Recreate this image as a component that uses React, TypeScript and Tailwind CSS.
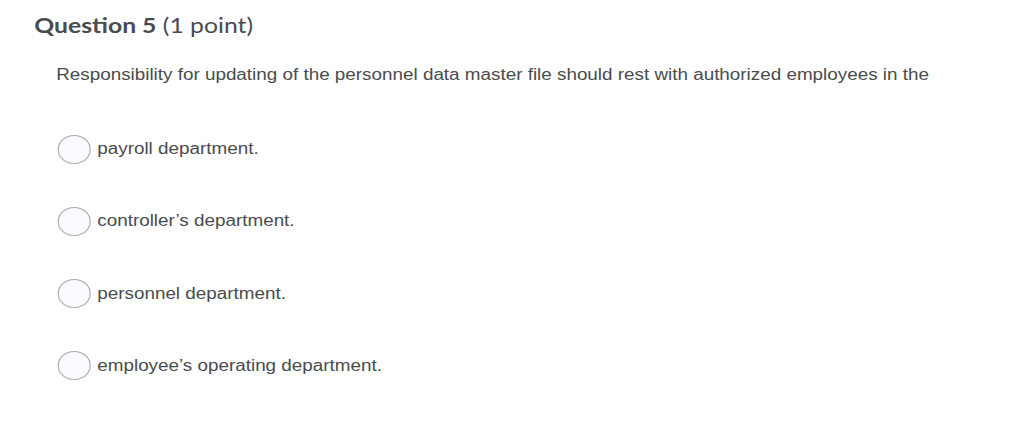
const options = [
  "payroll department.",
  "controller\u2019s department.",
  "personnel department.",
  "employee\u2019s operating department.",
];

// the reference is a screenshot stretched sideways (~1.175x), so the whole
// question block is scaled on x to match it
const App = () => {
  return (
    <div className="min-h-screen bg-white text-[#494c4e] overflow-hidden">
      <div className="origin-top-left scale-x-[1.178] pl-[29px] pt-[11px]">
        <h2 className="font-['Lato',sans-serif] text-[21px] leading-[28px]">
          <span className="font-bold">Question 5</span> (1 point)
        </h2>

        <p className="font-['Liberation_Sans',Arial,sans-serif] text-[16px] leading-[24px] mt-[24px] ml-[18.7px] whitespace-nowrap">
          Responsibility for updating of the personnel data master file should rest with authorized employees in the
        </p>

        <div className="mt-[47.5px] ml-[20.4px] flex flex-col gap-[43.3px]">
          {options.map((label) => (
            <label key={label} className="flex items-center gap-[6px] h-[29px]">
              <span className="w-[27.2px] h-[29px] rounded-full border border-[#a8acb0] bg-[#f9fbff] shrink-0" />
              <span className="font-['Liberation_Sans',Arial,sans-serif] text-[16px] leading-[24px]">
                {label}
              </span>
            </label>
          ))}
        </div>
      </div>
    </div>
  );
};

export default App;
